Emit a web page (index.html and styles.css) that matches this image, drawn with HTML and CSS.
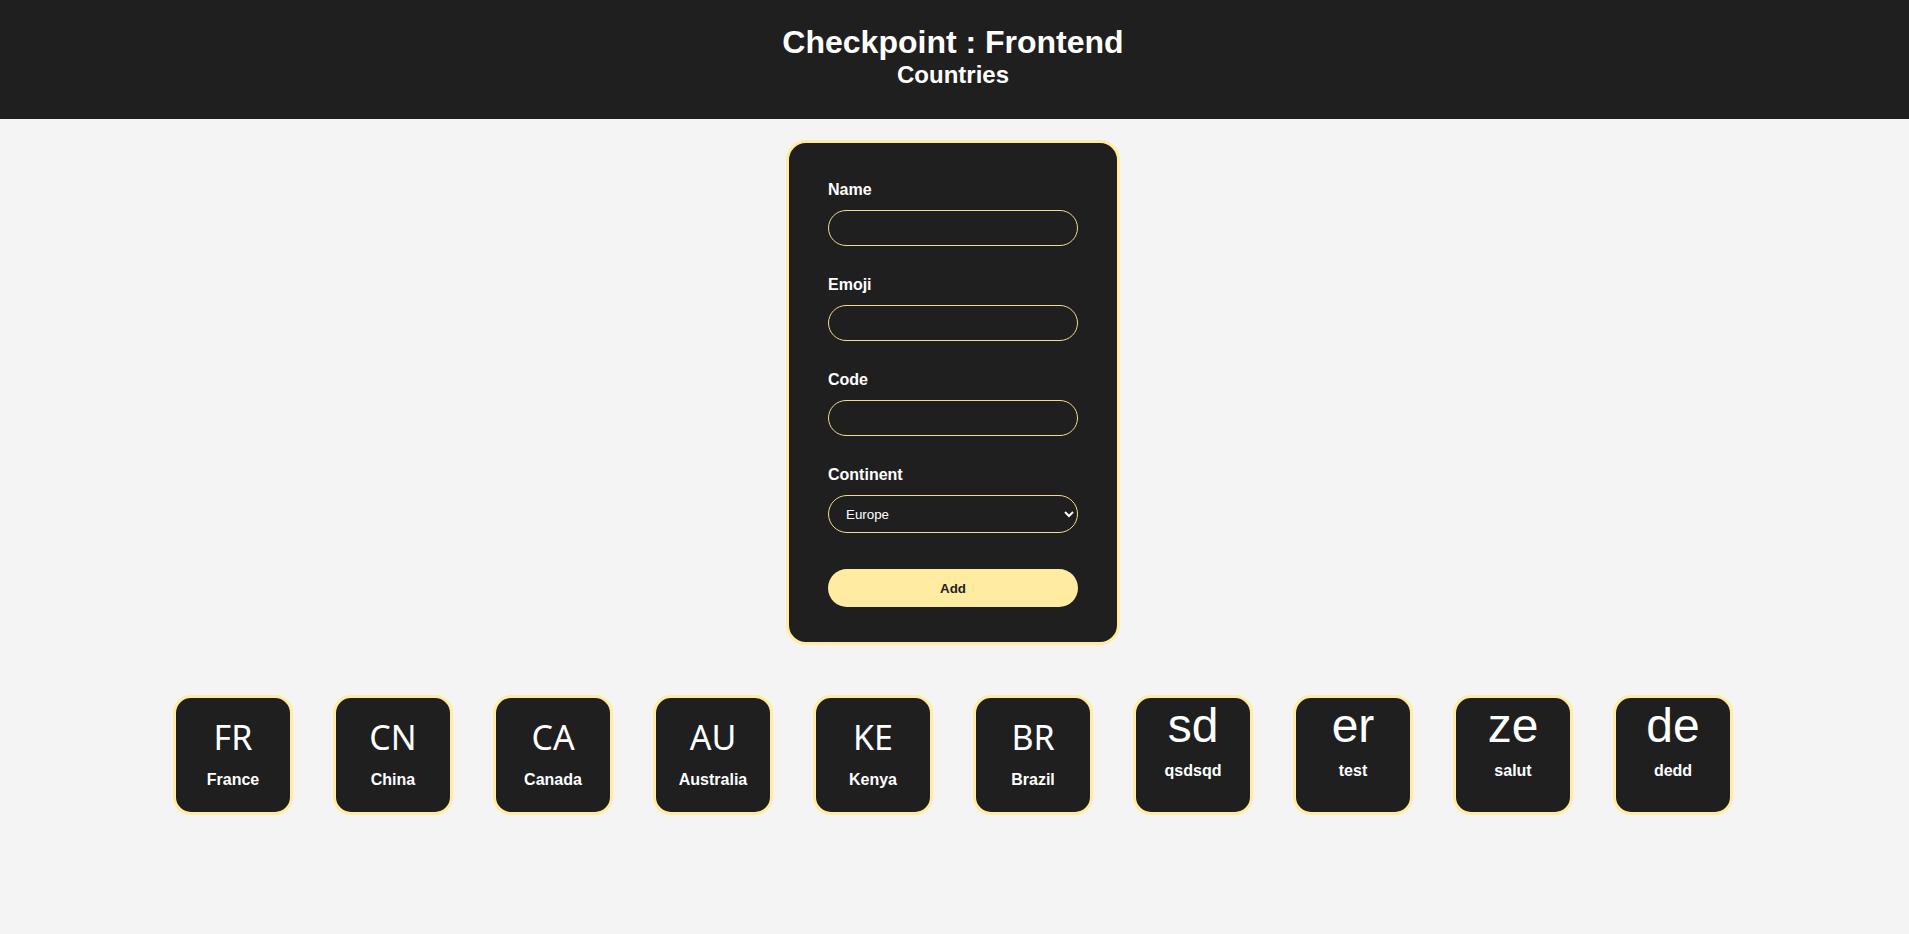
FILE: index.html
```html
<!DOCTYPE html>
<html lang="en">

<head>
    <meta charset="UTF-8">
    <meta name="viewport" content="width=device-width, initial-scale=1.0">
    <title>Checkpoint : Frontend</title>
    <link rel="stylesheet" href="styles.css">
</head>

<body>
    <header class="header">
        <h1>Checkpoint : Frontend</h1>
        <h2>Countries</h2>
    </header>

    <main class="content">
        <form class="country-form">
            <div class="field">
                <label for="name">Name</label>
                <input id="name" type="text">
            </div>
            <div class="field">
                <label for="emoji">Emoji</label>
                <input id="emoji" type="text">
            </div>
            <div class="field">
                <label for="code">Code</label>
                <input id="code" type="text">
            </div>
            <div class="field">
                <label for="continent">Continent</label>
                <select id="continent">
                    <option>Europe</option>
                    <option>Asia</option>
                    <option>Africa</option>
                    <option>North America</option>
                    <option>South America</option>
                    <option>Oceania</option>
                </select>
            </div>
            <button type="button" class="add-btn">Add</button>
        </form>

        <div class="countries">
            <div class="country">
                <div class="country-emoji flag">FR</div>
                <div class="country-name">France</div>
            </div>
            <div class="country">
                <div class="country-emoji flag">CN</div>
                <div class="country-name">China</div>
            </div>
            <div class="country">
                <div class="country-emoji flag">CA</div>
                <div class="country-name">Canada</div>
            </div>
            <div class="country">
                <div class="country-emoji flag">AU</div>
                <div class="country-name">Australia</div>
            </div>
            <div class="country">
                <div class="country-emoji flag">KE</div>
                <div class="country-name">Kenya</div>
            </div>
            <div class="country">
                <div class="country-emoji flag">BR</div>
                <div class="country-name">Brazil</div>
            </div>
            <div class="country">
                <div class="country-emoji">sd</div>
                <div class="country-name">qsdsqd</div>
            </div>
            <div class="country">
                <div class="country-emoji">er</div>
                <div class="country-name">test</div>
            </div>
            <div class="country">
                <div class="country-emoji">ze</div>
                <div class="country-name">salut</div>
            </div>
            <div class="country">
                <div class="country-emoji">de</div>
                <div class="country-name">dedd</div>
            </div>
        </div>
    </main>
</body>

</html>
```

FILE: styles.css
```css
* {
    padding: 0;
    margin: 0;
    box-sizing: border-box;
}

body {
    font-family: "Liberation Sans", Arial, sans-serif;
    background-color: #f4f4f4;
    color: #fff;
}

/* header */
.header {
    background-color: #1f1f1f;
    text-align: center;
    padding: 24px 3px 30px 0;
}

.header h1 {
    font-size: 32px;
    line-height: 37px;
}

.header h2 {
    font-size: 24px;
    line-height: 28px;
}

.content {
    display: flex;
    flex-direction: column;
    align-items: center;
    padding: 21px 3px 0 0;
}

/* form */
.country-form {
    width: 334px;
    background-color: #1f1f1f;
    border: 3px solid #ffeca0;
    border-radius: 20px;
    padding: 38px 39px 35px;
    display: flex;
    flex-direction: column;
}

.field {
    display: flex;
    flex-direction: column;
    margin-bottom: 30px;
}

.field label {
    font-size: 16px;
    font-weight: bold;
    line-height: 18px;
    margin-bottom: 11px;
}

.field input,
.field select {
    width: 100%;
    height: 36px;
    border: 1px solid #f0dc8e;
    border-radius: 18px;
    background-color: #1f1f1f;
    color: #fff;
    padding: 0 14px;
    font-family: "Liberation Sans", Arial, sans-serif;
    font-size: 13.33px;
    outline: none;
}

.field select {
    height: 38px;
    border-radius: 19px;
    padding-left: 13px;
}

.field:last-of-type {
    margin-bottom: 36px;
}

.add-btn {
    height: 38px;
    border: none;
    border-radius: 19px;
    background-color: #ffeca0;
    color: #1f1f1f;
    font-family: "Liberation Sans", Arial, sans-serif;
    font-size: 13.33px;
    font-weight: bold;
    cursor: pointer;
}

/* countries list */
.countries {
    display: flex;
    justify-content: center;
    gap: 40px;
    margin-top: 50px;
}

.country {
    width: 120px;
    height: 120px;
    background-color: #1f1f1f;
    border: 3px solid #ffeca0;
    border-radius: 18px;
    display: flex;
    flex-direction: column;
    align-items: center;
}

.country-emoji {
    font-size: 48px;
    line-height: 55px;
}

.country-emoji.flag {
    font-family: "Noto Sans", "Open Sans", sans-serif;
    font-size: 34px;
    line-height: 49px;
    padding-top: 15px;
}

.country-name {
    font-size: 16px;
    font-weight: bold;
    line-height: 18px;
    margin-top: 9px;
}
```
